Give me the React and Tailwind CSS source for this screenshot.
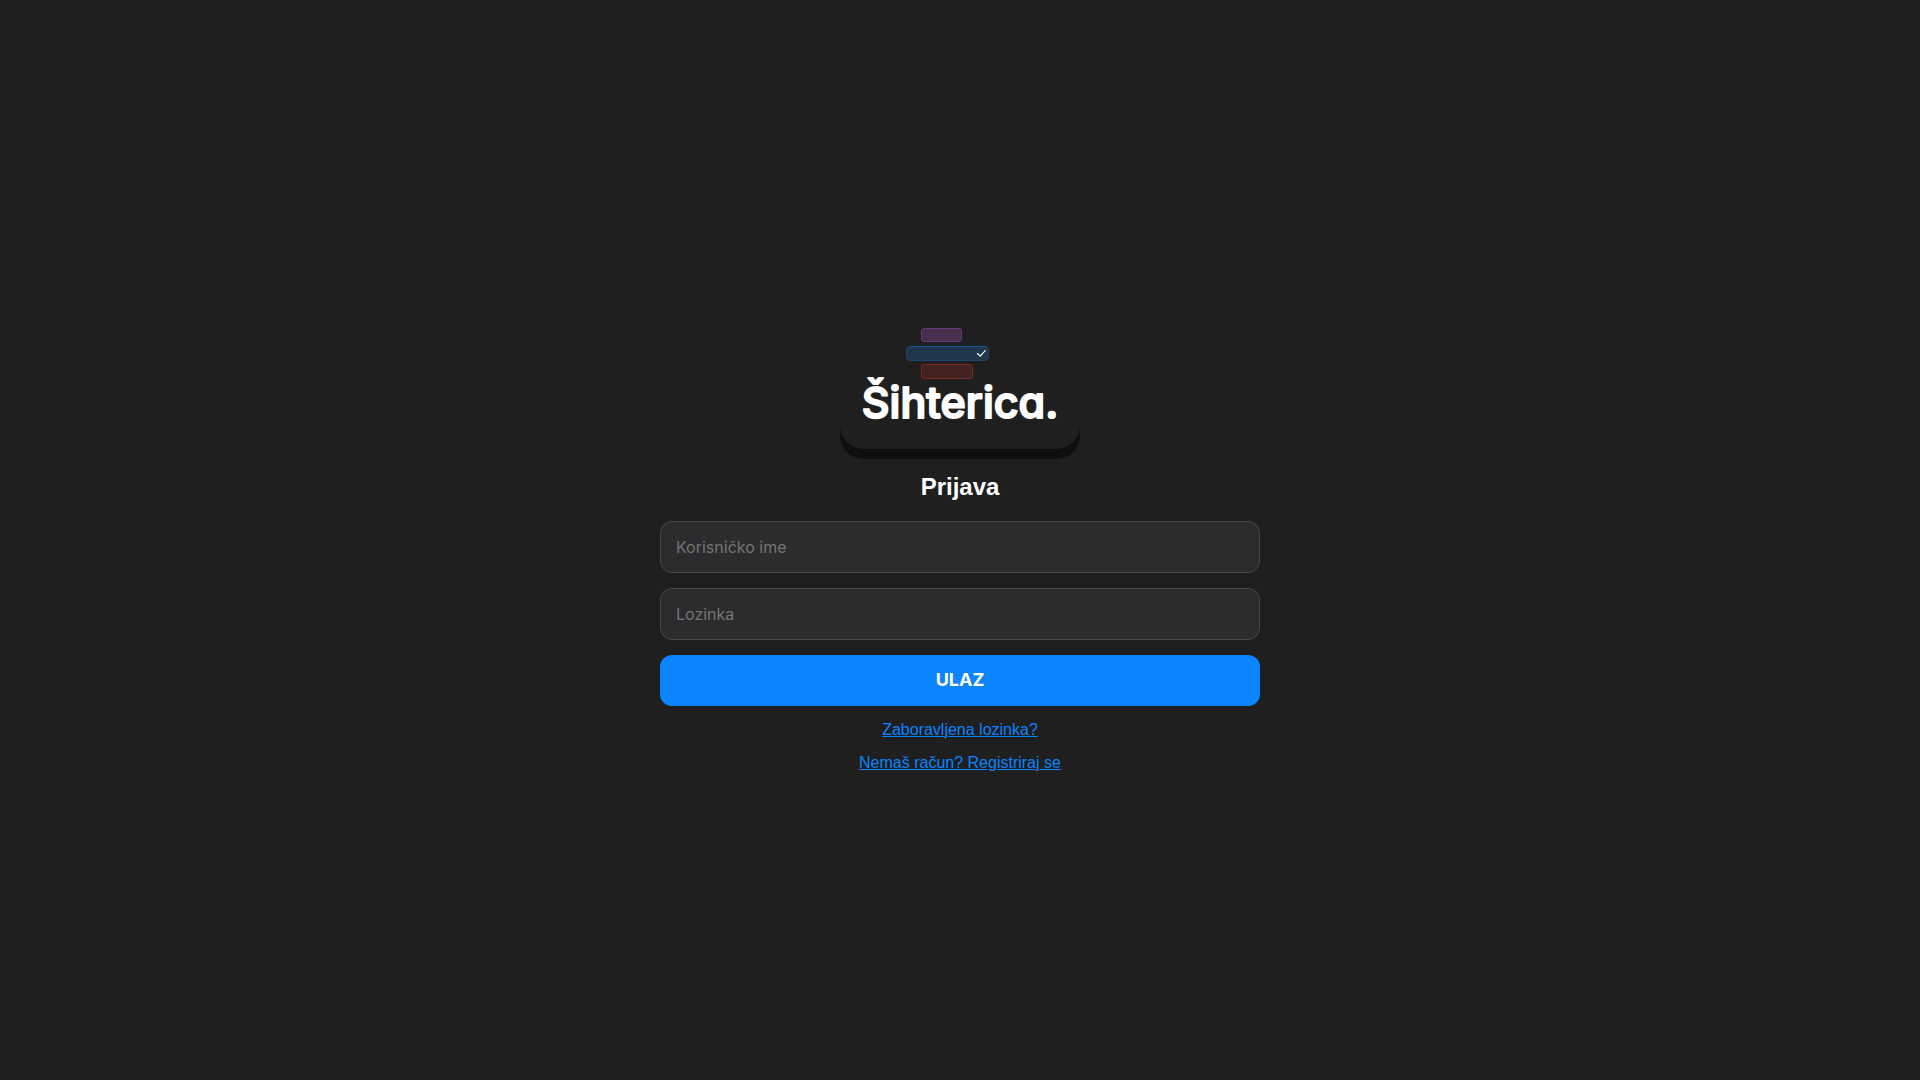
function Logo() {
  return (
    <svg
      viewBox="0 0 240 150"
      role="img"
      aria-label="Šihterica."
      className="h-[150px] w-60 rounded-3xl bg-[#1f1f1f] shadow-[0_10px_0_#0f0f0f]"
    >
      <rect x="81.5" y="29.5" width="40" height="13" rx="2.5" fill="#462f4e" stroke="#643a78" />
      <rect x="66.5" y="47.5" width="82" height="14" rx="3.5" fill="#21354b" stroke="#1d4670" />
      <path d="M69.5 47.5h76" stroke="#17569c" />
      <path d="M137.5 54.5l2.7 2.7 5-5.5" fill="none" stroke="#fff" strokeWidth="1.2" strokeLinecap="round" strokeLinejoin="round" />
      <rect x="81.5" y="65.5" width="51" height="14" rx="2.5" fill="#422322" stroke="#7a2a26" />
      <text
        x="120"
        y="119"
        textAnchor="middle"
        fill="#fff"
        stroke="#fff"
        strokeWidth="2"
        strokeLinejoin="round"
        className="font-['Inter',sans-serif] text-[43px] font-medium [font-feature-settings:'cv11']"
      >
        Šihterica.
      </text>
    </svg>
  );
}

const fieldClass =
  "block h-[52px] w-full rounded-xl border border-[#48484a] bg-[#2c2c2e] px-[15px] font-['Inter',sans-serif] text-base text-white placeholder:text-[#757575] outline-none focus:border-[#0a84ff]";

const linkClass = "text-base leading-[18px] text-[#0a84ff] underline";

export default function App() {
  return (
    <main className="flex min-h-screen flex-col items-center justify-center bg-[#1f1f1f] px-4 pb-2.5 font-['Liberation_Sans',Arial,sans-serif]">
      <Logo />
      <h1 className="mt-6 text-2xl leading-7 font-bold text-white">Prijava</h1>
      <form className="mt-5 flex w-full max-w-[600px] flex-col gap-[15px]" onSubmit={(e) => e.preventDefault()}>
        <input type="text" aria-label="Korisničko ime" placeholder="Korisničko ime" autoComplete="username" className={fieldClass} />
        <input type="password" aria-label="Lozinka" placeholder="Lozinka" autoComplete="current-password" className={fieldClass} />
        <button type="submit" className="h-[51px] w-full rounded-xl bg-[#0a84ff] font-['Inter',sans-serif] text-lg font-bold text-white">
          ULAZ
        </button>
      </form>
      <nav className="mt-[15px] flex flex-col items-center gap-[15px]">
        <a href="#lozinka" className={linkClass}>Zaboravljena lozinka?</a>
        <a href="#registracija" className={linkClass}>Nemaš račun? Registriraj se</a>
      </nav>
    </main>
  );
}
